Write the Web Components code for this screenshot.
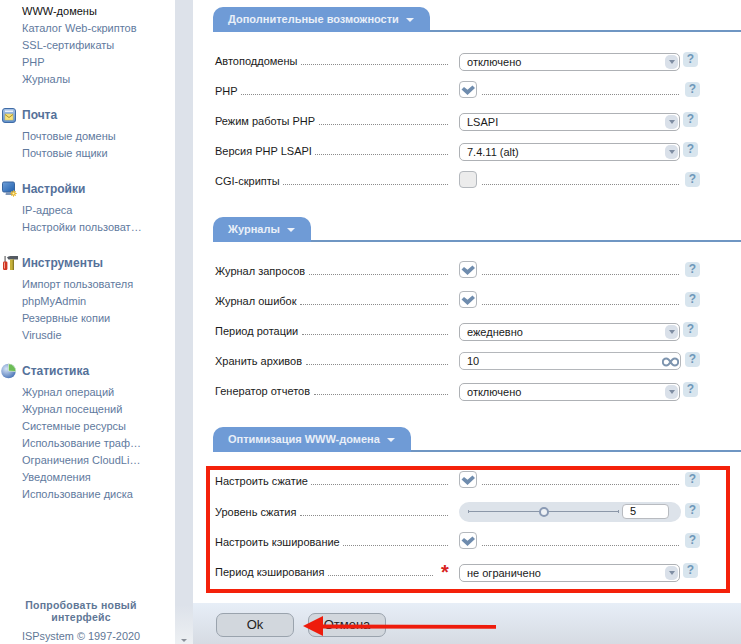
<!DOCTYPE html>
<html><head><meta charset="utf-8">
<style>
html,body{margin:0;padding:0;height:100%;overflow:hidden;background:#fff;font-family:"Liberation Sans",Arial,sans-serif}
body{width:741px;height:644px}
#app{display:flex;width:741px;height:644px}
</style></head><body>
<div id="app">
<isp-sidebar>
 <nav-group nohead>
  <nav-item active>WWW-домены</nav-item><nav-item>Каталог Web-скриптов</nav-item><nav-item>SSL-сертификаты</nav-item><nav-item>PHP</nav-item><nav-item>Журналы</nav-item>
 </nav-group>
 <nav-group title="Почта" icon="mail">
  <nav-item>Почтовые домены</nav-item><nav-item>Почтовые ящики</nav-item>
 </nav-group>
 <nav-group title="Настройки" icon="monitor">
  <nav-item>IP-адреса</nav-item><nav-item>Настройки пользоват…</nav-item>
 </nav-group>
 <nav-group title="Инструменты" icon="tools">
  <nav-item>Импорт пользователя</nav-item><nav-item>phpMyAdmin</nav-item><nav-item>Резервные копии</nav-item><nav-item>Virusdie</nav-item>
 </nav-group>
 <nav-group title="Статистика" icon="pie">
  <nav-item>Журнал операций</nav-item><nav-item>Журнал посещений</nav-item><nav-item>Системные ресурсы</nav-item><nav-item>Использование траф…</nav-item><nav-item>Ограничения CloudLi…</nav-item><nav-item>Уведомления</nav-item><nav-item>Использование диска</nav-item>
 </nav-group>
</isp-sidebar>
<isp-main>
 <form-section title="Дополнительные возможности">
  <form-row label="Автоподдомены"><fake-select>отключено</fake-select></form-row>
  <form-row label="PHP" kind="check"><fake-check checked></fake-check></form-row>
  <form-row label="Режим работы PHP"><fake-select>LSAPI</fake-select></form-row>
  <form-row label="Версия PHP LSAPI"><fake-select>7.4.11 (alt)</fake-select></form-row>
  <form-row label="CGI-скрипты" kind="check"><fake-check></fake-check></form-row>
 </form-section>
 <form-section title="Журналы">
  <form-row label="Журнал запросов" kind="check"><fake-check checked></fake-check></form-row>
  <form-row label="Журнал ошибок" kind="check"><fake-check checked></fake-check></form-row>
  <form-row label="Период ротации"><fake-select>ежедневно</fake-select></form-row>
  <form-row label="Хранить архивов" kind="input"><fake-input>10</fake-input></form-row>
  <form-row label="Генератор отчетов"><fake-select>отключено</fake-select></form-row>
 </form-section>
 <form-section title="Оптимизация WWW-домена" style="--row:30.4px">
  <form-row label="Настроить сжатие" kind="check"><fake-check checked></fake-check></form-row>
  <form-row label="Уровень сжатия" kind="slider"><fake-slider value="5"></fake-slider></form-row>
  <form-row label="Настроить кэширование" kind="check"><fake-check checked></fake-check></form-row>
  <form-row label="Период кэширования" required><fake-select>не ограничено</fake-select></form-row>
 </form-section>
</isp-main>
</div>
<script>
const mk=(name,html)=>customElements.define(name,class extends HTMLElement{
  connectedCallback(){ if(this.shadowRoot) return; const r=this.attachShadow({mode:'open'}); r.innerHTML=typeof html==='function'?html(this):html;}
});
const ICONS={
mail:`<svg width="16" height="16" viewBox="0 0 16 16"><defs><linearGradient id="m" x1="0" y1="0" x2="0" y2="1"><stop offset="0" stop-color="#a9c4e6"/><stop offset="1" stop-color="#5f8fcb"/></linearGradient></defs><rect x="2.500" y="1.500" width="13" height="14" rx="2.500" fill="url(#m)" stroke="#3f6ba6"/><rect x="5" y="3.500" width="8" height="1.500" fill="#eaf1fa"/><rect x="5" y="7" width="8" height="6" fill="#f5e27d" stroke="#d9c25a" stroke-width=".5"/><path d="M5 7.500l4 3 4-3" fill="none" stroke="#a88f2e" stroke-width="1"/></svg>`,
monitor:`<svg width="17" height="16" viewBox="0 0 17 16"><defs><linearGradient id="s" x1="0" y1="0" x2="1" y2="1"><stop offset="0" stop-color="#6f9fd8"/><stop offset="1" stop-color="#1f5fae"/></linearGradient></defs><rect x="2.500" y="1" width="12" height="10" rx="1.500" fill="url(#s)" stroke="#38659f"/><path d="M6 11h5v1.500h2.500V14h-8z" fill="#7f97b8"/><circle cx="13.500" cy="12.500" r="2.300" fill="#e5b52c"/><path d="M13.500 9.300v6.400M10.300 12.500h6.400M11.300 10.300l4.400 4.400M15.700 10.300l-4.400 4.400" stroke="#e5b52c" stroke-width="1"/><circle cx="13.500" cy="12.500" r="1" fill="#fff3bd"/></svg>`,
tools:`<svg width="18" height="16" viewBox="0 0 18 16"><rect x="4.300" y="1" width="1.600" height="6" fill="#8d8d8d"/><rect x="3" y="6.500" width="4.400" height="8.500" rx="1.200" fill="#cf3420"/><rect x="4" y="7.500" width="1" height="6" fill="#f0a08f"/><path d="M7 2.500C8 1 10 1 12 1h6v3.500H8.500C8 3.700 7.500 3.200 7 2.500z" fill="#545a62"/><rect x="10" y="4.500" width="4" height="10.500" fill="#c6b13a"/><rect x="12.700" y="4.500" width="1.300" height="10.500" fill="#8b7d25"/></svg>`,
pie:`<svg width="17" height="16" viewBox="0 0 17 16"><defs><radialGradient id="p" cx=".35" cy=".35" r=".8"><stop offset="0" stop-color="#d5e3f6"/><stop offset="1" stop-color="#3b68b0"/></radialGradient></defs><circle cx="8.500" cy="8" r="7.300" fill="url(#p)"/><path d="M8.500 .800a7.300 7.300 0 0 1 7.300 7.800l-7.300-.600z" fill="#6dbd57" stroke="#eaf6e2" stroke-width=".6"/></svg>`};
mk('isp-sidebar',`<style>
:host{display:flex;flex-direction:column;width:175px;height:644px;flex:none;box-sizing:border-box;background:#fff;overflow:hidden}
.nav{flex:1;padding-top:3px;display:flex;flex-direction:column;gap:17px}
.foot{height:46px;width:162px;padding-top:1px;box-sizing:border-box;text-align:center;font-size:11px;color:#5f7796}
.try{font-weight:bold;font-size:10.5px;line-height:12px;letter-spacing:.25px;margin:0 auto;width:130px}
.cr{margin-top:6px;line-height:14px;font-size:10.9px}
</style><div class="nav"><slot></slot></div><div class="foot"><div class="try">Попробовать новый интерфейс</div><div class="cr">ISPsystem © 1997-2020</div></div>`);
mk('nav-group',t=>`<style>
:host{display:block}
.h{display:flex;align-items:center;height:20px;margin-bottom:3px;position:relative;padding-left:22px}
.i{position:absolute;left:0;top:2px;width:18px;height:16px;display:block}
.t{font:bold 12px/20px "Liberation Sans",sans-serif;color:#55719a}
</style>${t.hasAttribute('nohead')?'':`<div class="h"><span class="i">${ICONS[t.getAttribute('icon')]}</span><span class="t">${t.getAttribute('title')}</span></div>`}<slot></slot>`);
mk('nav-item',`<style>
:host{display:block;height:17px;padding-left:22px;font:11px/17px "Liberation Sans",sans-serif;color:#5f7a9e;white-space:nowrap}
:host([active]){color:#111}
</style><slot></slot>`);
mk('isp-main',`<style>
:host{display:flex;flex:1;height:644px;position:relative;overflow:hidden}
.rail{width:18px;flex:none;background:linear-gradient(#dde2ea 0 94%,#edf0f3);display:flex;flex-direction:column;justify-content:flex-end;align-items:center;padding-bottom:2px;box-sizing:border-box}
.rail i{display:block;border:3px solid transparent;border-top:3px solid #8a9099;border-bottom:0}
.col{flex:1;display:flex;flex-direction:column;min-width:0}
.c{flex:1;min-height:0;overflow:hidden;background:#fff;padding:7px 0 0 20px;box-sizing:border-box;display:flex;flex-direction:column;gap:21px}
.bar{flex:none;height:41px;background:linear-gradient(#e7eef7,#d6dbe3);display:flex;gap:14px;padding:10px 0 0 23px;box-sizing:border-box}
.btn{width:78px;height:24px;box-sizing:border-box;border:1px solid #9aa3ad;border-radius:7px;background:#d2d7dd;font:13px/22px "Liberation Sans",sans-serif;color:#222;text-align:center}
.red{position:absolute;left:31px;top:466px;width:524px;height:127px;box-sizing:border-box;border:4px solid #f4210a;pointer-events:none}
.arrow{position:absolute;left:127px;top:612px}
</style><div class="rail"><i></i></div><div class="col"><div class="c"><slot></slot></div>
<div class="bar"><div class="btn">Ok</div><div class="btn">Отмена</div></div></div>
<div class="red"></div>
<svg class="arrow" width="200" height="28" viewBox="0 0 200 28"><path d="M18 12.500l176 .5v3.800l-176-.3z" fill="#ee1c0c"/><path d="M1 14L21 4v20z" fill="#ee1c0c"/></svg>`);
mk('form-section',t=>`<style>
:host{display:block;width:528px}
.head{display:flex;border-bottom:2px solid #6f96c3;height:23px;margin-bottom:14px}
.tab{background:#6f9bd6;border-radius:10px 10px 0 0;height:25px;padding:0 16px 0 15px;display:flex;align-items:center;gap:7px;font:bold 11px/25px "Liberation Sans",sans-serif;color:#e9eff8;white-space:nowrap;box-sizing:border-box;margin-bottom:-2px}
.tri{width:0;height:0;border:4px solid transparent;border-top:4px solid #edf2fa;border-bottom:0}
</style><div class="head"><div class="tab">${t.getAttribute('title')}<span class="tri"></span></div></div><slot></slot>`);
mk('form-row',t=>{const k=t.getAttribute('kind')||'select';return `<style>
:host{display:flex;height:var(--row,30px);align-items:center;width:528px;padding-left:2px;box-sizing:border-box;position:relative}
.l{width:233px;flex:none;display:flex;align-items:baseline;font:11px/14px "Liberation Sans",sans-serif;color:#1a1a1a;box-sizing:border-box;padding-right:${t.hasAttribute('required')?'15':'0'}px}
.l span{white-space:nowrap}
.d{flex:1;margin-left:3.500px;border-bottom:1px dotted #8c8c8c;height:9px}
.ctl{width:${k==='input'||k==='slider'?222:221}px;margin-left:11px;flex:none;display:flex;align-items:center;position:relative}
.ln{flex:1;margin-left:5px;margin-right:1px;border-bottom:1px dotted #8c8c8c;height:1px;position:relative;top:3px;display:${k==='check'?'block':'none'}}
.help{width:15px;height:15px;flex:none;border-radius:4px;background:#d8e5ee;color:#6f98ba;font:bold 12px/14px "Liberation Sans",sans-serif;text-align:center;margin-left:${k==='select'?'3px':k==='check'?'5px':'4px'};position:relative;top:${k==='select'?'-2px':'-1.500px'}}
.star{position:absolute;left:228px;top:calc(50% - 11px);color:#d8231f;font:bold 20px/22px "Liberation Sans",sans-serif}
</style><div class="l"><span>${t.getAttribute('label')}</span><span class="d"></span></div>${t.hasAttribute('required')?'<span class="star">*</span>':''}<div class="ctl"><slot></slot><span class="ln"></span></div><span class="help">?</span>`});
mk('fake-select',`<style>
:host{display:flex;align-items:center;width:221px;height:18px;margin-top:2px;box-sizing:border-box;border:1px solid #aeb1b5;border-radius:5px;background:#fff;font:11px/16px "Liberation Sans",sans-serif;color:#1a1a1a;padding-left:7px;position:relative}
.a{position:absolute;right:1px;top:1px;width:13px;height:14px;border-radius:5px;background:#d9e0e9;display:flex;align-items:center;justify-content:center}
.a:after{content:"";border:3.500px solid transparent;border-top:4px solid #7f8ea3;border-bottom:0}
</style><slot></slot><span class="a"></span>`);
mk('fake-check',t=>`<style>
:host{display:block;width:18px;height:17px;margin-top:-3px;flex:none;box-sizing:border-box;border:1px solid #b4b8bd;border-radius:4px;background:${t.hasAttribute('checked')?'#fff':'#ececec'}}
svg{display:block}
</style>${t.hasAttribute('checked')?'<svg width="16" height="15" viewBox="0 0 16 15"><path d="M1.500 7.500L4 5l3.500 2.800L12.500 3.500 15 6 7.500 13z" fill="#6f8cae"/></svg>':''}`);
mk('fake-input',`<style>
:host{display:flex;align-items:center;width:222px;height:18px;box-sizing:border-box;border:1px solid #b4b7bb;border-radius:5px;background:#fff;font:11px/16px "Liberation Sans",sans-serif;color:#1a1a1a;padding-left:7px;position:relative}
svg{position:absolute;right:1px;top:2.500px}
</style><slot></slot><svg width="17" height="12" viewBox="0 0 17 12"><path d="M8.500 6C7 3.500 5.800 2.500 4.300 2.500a3.500 3.500 0 0 0 0 7C5.800 9.500 7 8.500 8.500 6c1.500-2.500 2.700-3.500 4.200-3.500a3.500 3.500 0 0 1 0 7C11.200 9.500 10 8.500 8.500 6z" fill="none" stroke="#7d94ae" stroke-width="2"/></svg>`);
mk('fake-slider',t=>`<style>
:host{display:flex;align-items:center;width:222px;height:20px;box-sizing:border-box;border-radius:10px;background:#dde3ea;padding-left:9px;position:relative}
.tr{width:151px;height:1px;background:#8b97a8;position:relative;flex:none;margin-right:3px}
.tr:before,.tr:after{content:"";position:absolute;top:-1px;width:1px;height:3px;background:#8b97a8}
.tr:before{left:0}.tr:after{right:0}
.k{position:absolute;left:71px;top:-4.500px;width:6px;height:6px;border:2px solid #8a9ab4;border-radius:50%;background:#eef1f5;box-sizing:content-box}
.v{width:47px;height:15px;box-sizing:border-box;border:1px solid #b8bbc0;border-radius:4px;background:#fff;font:11px/13px "Liberation Sans",sans-serif;color:#111;padding-left:7px}
</style><div class="tr"><span class="k"></span></div><div class="v">${t.getAttribute('value')}</div>`);
</script>
</body></html>
